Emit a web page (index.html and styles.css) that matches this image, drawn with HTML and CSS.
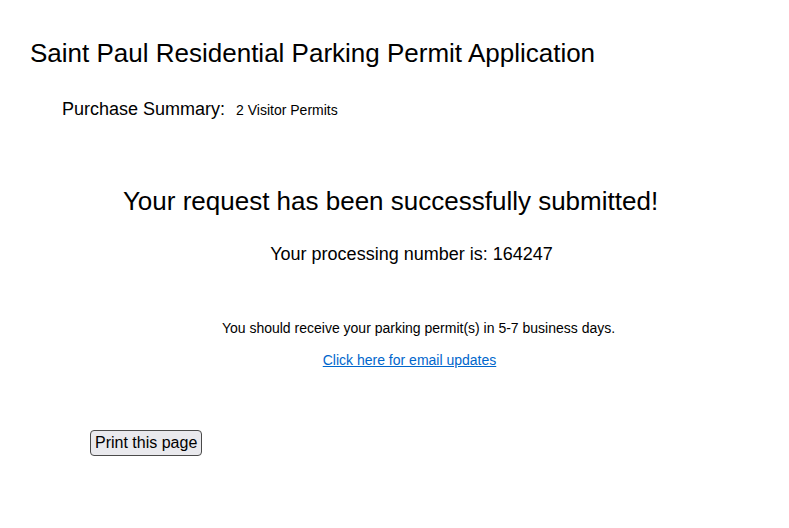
FILE: index.html
```html
<!DOCTYPE html>
<html>
<head>
<meta charset="utf-8">
<link rel="stylesheet" href="styles.css">
</head>
<body>
<div class="page">
  <h1 class="title">Saint Paul Residential Parking Permit Application</h1>
  <div class="summary">
    <span class="summary-label">Purchase Summary:</span>
    <span class="summary-value">2 Visitor Permits</span>
  </div>
  <h2 class="success">Your request has been successfully submitted!</h2>
  <p class="processing">Your processing number is: 164247</p>
  <p class="receive">You should receive your parking permit(s) in 5-7 business days.</p>
  <p class="updates"><a href="#">Click here for email updates</a></p>
  <div class="actions">
    <button class="print" type="button">Print this page</button>
  </div>
</div>
</body>
</html>
```

FILE: styles.css
```css
html, body {
  margin: 0;
  padding: 0;
  background: #ffffff;
}
body {
  font-family: "Liberation Sans", Arial, sans-serif;
  color: #000000;
}
.page {
  padding: 0 0 0 30px;
}
.title {
  margin: 0;
  padding-top: 38px;
  font-size: 26px;
  font-weight: normal;
  line-height: 30px;
}
.summary {
  margin-top: 31px;
  padding-left: 32px;
  display: flex;
  align-items: baseline;
  gap: 11px;
}
.summary-label {
  font-size: 18px;
}
.summary-value {
  font-size: 14px;
}
.success {
  margin: 65px 0 0 0;
  font-size: 26px;
  font-weight: normal;
  text-align: center;
  line-height: 32px;
  padding-right: 38px;
}
.processing {
  margin: 26px 0 0 0;
  font-size: 18px;
  text-align: center;
  line-height: 22px;
  padding-left: 4px;
}
.receive {
  margin: 54px 0 0 0;
  font-size: 14px;
  text-align: center;
  line-height: 18px;
  padding-left: 18px;
}
.updates {
  margin: 14px 0 0 0;
  font-size: 14px;
  text-align: center;
  line-height: 18px;
}
.updates a {
  color: #0066cc;
}
.actions {
  margin-top: 61px;
  padding-left: 60px;
}
.print {
  font-family: "Liberation Sans", Arial, sans-serif;
  font-size: 16px;
  color: #000;
  background: #e9e9ed;
  border: 1px solid #4a4a4a;
  border-radius: 4px;
  padding: 2px 4px;
  height: 26px;
  box-sizing: border-box;
}
```
